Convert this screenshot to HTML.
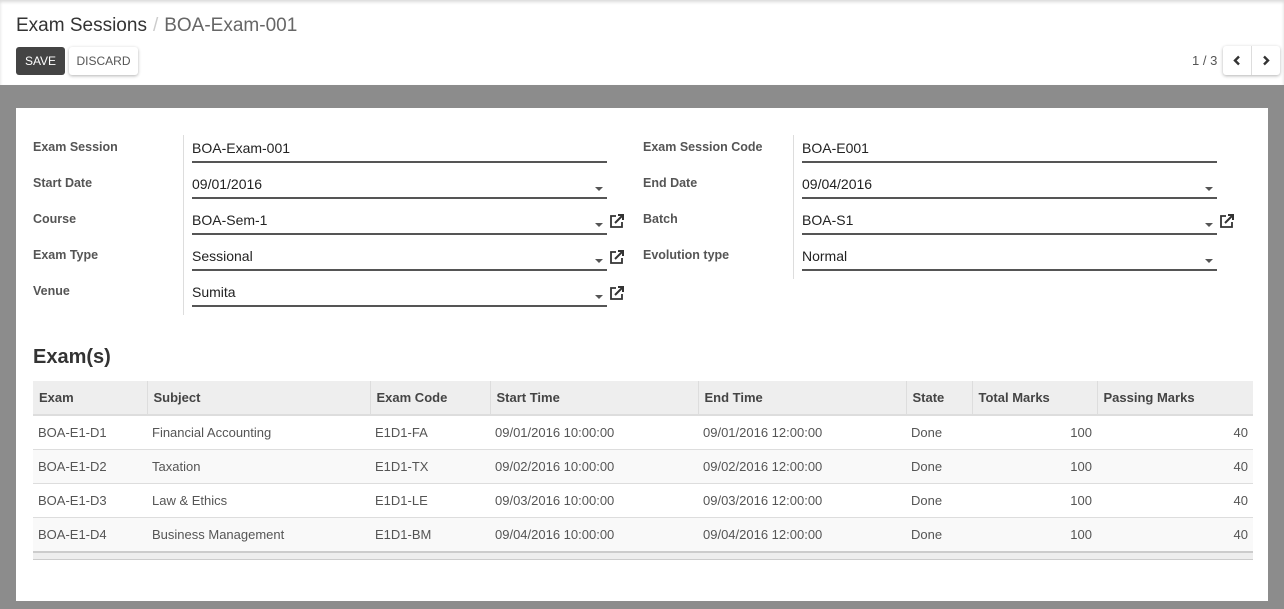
<!DOCTYPE html>
<html><head><style>
*{box-sizing:border-box;margin:0;padding:0}
body{width:1284px;height:609px;overflow:hidden;background:#fff;font-family:"Liberation Sans",sans-serif;color:#4c4c4c;position:relative}
.top{position:absolute;left:0;top:0;width:1284px;height:85px;background:#fff;box-shadow:inset 0 2px 3px rgba(0,0,0,.15)}
.bc{position:absolute;left:16px;top:15px;font-size:19px;color:#333}
.bc span{color:#ccc;margin:0 6px}
.bc b{font-weight:normal;color:#666}
.btn{position:absolute;top:47px;height:28px;font-size:12px;line-height:28px;text-align:center;border-radius:3px}
.save{left:16px;width:49px;background:#444;color:#fff}
.disc{left:69px;width:69px;background:#fff;color:#555;box-shadow:0 1px 3px rgba(0,0,0,.3)}
.pg{position:absolute;left:1192px;top:53px;font-size:13px;color:#555}
.nav{position:absolute;left:1223px;top:46px;width:57px;height:29px;border-radius:3px;box-shadow:0 1px 3px rgba(0,0,0,.3);background:#fff}
.nav svg{position:absolute;top:9px}
.gray{position:absolute;left:0;top:85px;width:1284px;height:524px;background:#8c8c8c}
.card{position:absolute;left:16px;top:108px;width:1252px;height:493px;background:#fff}
.lbl{position:absolute;font-size:12.5px;font-weight:bold;color:#555}
.val{position:absolute;font-size:14px;color:#222;height:25px;border-bottom:2px solid #555;padding-top:2px}
.vl{position:absolute;width:1px;background:#ddd}
.dd{position:absolute;width:0;height:0;border-left:4px solid transparent;border-right:4px solid transparent;border-top:4px solid #555}
.ext{position:absolute}
h2{position:absolute;left:33px;top:346px;font-size:20px;color:#333}
table{position:absolute;left:33px;top:381px;width:1220px;border-collapse:collapse;font-size:13px}
th{background:#eee;height:34px;text-align:left;padding-left:6px;font-weight:bold;color:#444;border-left:1px solid #ddd;border-bottom:2px solid #ddd}
th:first-child{border-left:none}
td{height:34px;padding-left:5px;color:#555;border-top:1px solid #ddd}
tr:nth-child(odd) td{background:#f9f9f9}
td.r{text-align:right;padding-right:5px}
.foot{position:absolute;left:33px;top:551px;width:1220px;height:9px;background:#eee;border-top:2px solid #ccc;border-bottom:1px solid #ccc}
</style></head><body>
<div class="top"></div>
<div class="bc">Exam Sessions<span>/</span><b>BOA-Exam-001</b></div>
<div class="btn save">SAVE</div><div class="btn disc">DISCARD</div>
<div class="pg">1 / 3</div>
<div class="nav"><div style="position:absolute;left:28px;top:0;width:1px;height:29px;background:#ddd"></div>
<svg style="left:10px" width="8" height="11" viewBox="0 0 8 11"><path d="M6 1.5L2 5.5l4 4" fill="none" stroke="#333" stroke-width="2.4"/></svg>
<svg style="left:39px" width="8" height="11" viewBox="0 0 8 11"><path d="M2 1.5l4 4-4 4" fill="none" stroke="#333" stroke-width="2.4"/></svg></div>
<div class="gray"></div>
<div class="card"></div>

<div class="vl" style="left:183px;top:135px;height:180px"></div>
<div class="vl" style="left:793px;top:135px;height:144px"></div>

<div class="lbl" style="left:33px;top:140px">Exam Session</div>
<div class="lbl" style="left:33px;top:176px">Start Date</div>
<div class="lbl" style="left:33px;top:212px">Course</div>
<div class="lbl" style="left:33px;top:248px">Exam Type</div>
<div class="lbl" style="left:33px;top:284px">Venue</div>
<div class="lbl" style="left:643px;top:140px">Exam Session Code</div>
<div class="lbl" style="left:643px;top:176px">End Date</div>
<div class="lbl" style="left:643px;top:212px">Batch</div>
<div class="lbl" style="left:643px;top:248px">Evolution type</div>

<div class="val" style="left:192px;top:138px;width:415px">BOA-Exam-001</div>
<div class="val" style="left:192px;top:174px;width:415px">09/01/2016</div>
<div class="val" style="left:192px;top:210px;width:415px">BOA-Sem-1</div>
<div class="val" style="left:192px;top:246px;width:415px">Sessional</div>
<div class="val" style="left:192px;top:282px;width:415px">Sumita</div>
<div class="val" style="left:802px;top:138px;width:415px">BOA-E001</div>
<div class="val" style="left:802px;top:174px;width:415px">09/04/2016</div>
<div class="val" style="left:802px;top:210px;width:415px">BOA-S1</div>
<div class="val" style="left:802px;top:246px;width:415px">Normal</div>

<div class="dd" style="left:595px;top:187px"></div>
<div class="dd" style="left:595px;top:223px"></div>
<div class="dd" style="left:595px;top:259px"></div>
<div class="dd" style="left:595px;top:295px"></div>
<div class="dd" style="left:1205px;top:187px"></div>
<div class="dd" style="left:1205px;top:223px"></div>
<div class="dd" style="left:1205px;top:259px"></div>

<svg class="ext" style="left:609px;top:213px" width="16" height="16" viewBox="0 0 16 16"><path d="M7 3H2v11h11V9" fill="none" stroke="#333" stroke-width="1.8"/><path d="M6 10L14 2M9 2h5v5" fill="none" stroke="#333" stroke-width="2"/></svg>
<svg class="ext" style="left:609px;top:249px" width="16" height="16" viewBox="0 0 16 16"><path d="M7 3H2v11h11V9" fill="none" stroke="#333" stroke-width="1.8"/><path d="M6 10L14 2M9 2h5v5" fill="none" stroke="#333" stroke-width="2"/></svg>
<svg class="ext" style="left:609px;top:285px" width="16" height="16" viewBox="0 0 16 16"><path d="M7 3H2v11h11V9" fill="none" stroke="#333" stroke-width="1.8"/><path d="M6 10L14 2M9 2h5v5" fill="none" stroke="#333" stroke-width="2"/></svg>
<svg class="ext" style="left:1219px;top:213px" width="16" height="16" viewBox="0 0 16 16"><path d="M7 3H2v11h11V9" fill="none" stroke="#333" stroke-width="1.8"/><path d="M6 10L14 2M9 2h5v5" fill="none" stroke="#333" stroke-width="2"/></svg>

<h2>Exam(s)</h2>
<table>
<tr><th style="width:114px">Exam</th><th style="width:223px">Subject</th><th style="width:120px">Exam Code</th><th style="width:208px">Start Time</th><th style="width:208px">End Time</th><th style="width:66px">State</th><th style="width:125px">Total Marks</th><th>Passing Marks</th></tr>
<tr><td>BOA-E1-D1</td><td>Financial Accounting</td><td>E1D1-FA</td><td>09/01/2016 10:00:00</td><td>09/01/2016 12:00:00</td><td>Done</td><td class="r">100</td><td class="r">40</td></tr>
<tr><td>BOA-E1-D2</td><td>Taxation</td><td>E1D1-TX</td><td>09/02/2016 10:00:00</td><td>09/02/2016 12:00:00</td><td>Done</td><td class="r">100</td><td class="r">40</td></tr>
<tr><td>BOA-E1-D3</td><td>Law &amp; Ethics</td><td>E1D1-LE</td><td>09/03/2016 10:00:00</td><td>09/03/2016 12:00:00</td><td>Done</td><td class="r">100</td><td class="r">40</td></tr>
<tr><td>BOA-E1-D4</td><td>Business Management</td><td>E1D1-BM</td><td>09/04/2016 10:00:00</td><td>09/04/2016 12:00:00</td><td>Done</td><td class="r">100</td><td class="r">40</td></tr>
</table>
<div class="foot"></div>
</body></html>
